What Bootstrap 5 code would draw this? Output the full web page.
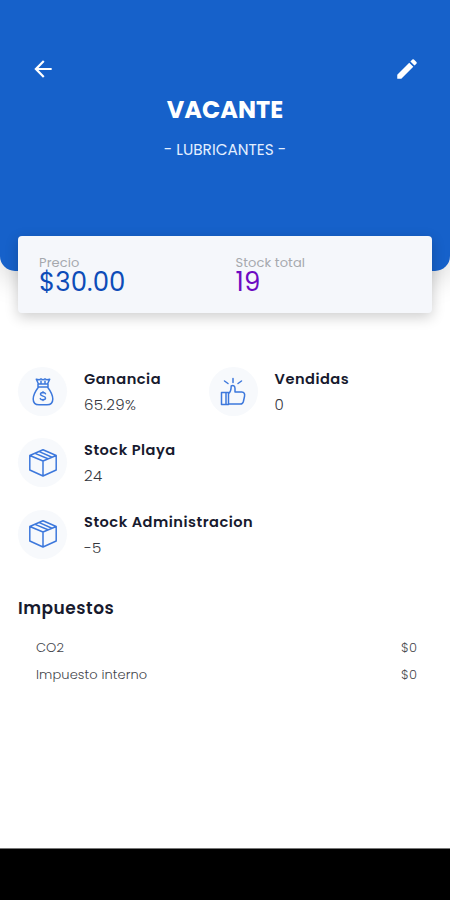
<!DOCTYPE html>
<html lang="es">
<head>
<meta charset="utf-8">
<meta name="viewport" content="width=device-width, initial-scale=1">
<title>Vacante</title>
<link href="https://cdn.jsdelivr.net/npm/bootstrap@5.3.0/dist/css/bootstrap.min.css" rel="stylesheet">
<style>
body{font-family:Poppins,Inter,"Open Sans",sans-serif;height:900px;overflow:hidden;color:#171a2e}
.hero{height:271px;background:#1661ca;border-radius:0 0 15px 15px;padding:56px 30px 0;box-shadow:0 8px 28px rgba(0,0,0,.17)}
.hero-title{font-size:24px;line-height:30px;font-weight:700;margin-top:13px}
.hero-sub{font-size:15.3px;line-height:20px;margin-top:15px;color:#e3efff}
.summary{height:77px;margin:-35px 18px 0;background:#f5f7fb;border-radius:4px;padding:18px 0 0 21px;box-shadow:0 4px 14px rgba(0,0,0,.2)}
.summary-cell{width:197px}
.cap{font-size:13px;line-height:17px;color:#a6a9ae;letter-spacing:.1px}
.amount{font-size:26px;line-height:23px;font-weight:400;color:#0d4cb8;letter-spacing:.1px}
.violet{color:#6d0bc2}
.stats{margin:53px 18px 0}
.stat{height:71.3px}
.stat-wide{width:190.5px}
.disc{width:49px;height:49px;border-radius:50%;background:#f7f9fc;margin-top:1px;flex:none}
.disc svg{fill:none;stroke:#3d78dc;stroke-width:1.5;stroke-linejoin:round;stroke-linecap:round}
.stat-body{margin-left:17px;padding-top:1px;white-space:nowrap}
.stat-name{font-size:14.6px;line-height:24px;font-weight:600;letter-spacing:.5px}
.stat-value{font-size:15px;line-height:20px;font-weight:300;color:#33353c;margin-top:4px;letter-spacing:.3px}
.taxes{margin:16px 18px 0}
.tax-head{font-size:17px;line-height:24px;font-weight:600;margin:0 0 14px;letter-spacing:.5px}
.tax-row{font-size:13px;line-height:27px;font-weight:300;color:#44464c;padding:0 15px 0 18px;letter-spacing:.1px}
.sysbar{height:52px;background:#000;border-top:1px solid #777}
</style>
</head>
<body class="d-flex flex-column bg-white">
<header class="hero text-white text-center">
  <div class="d-flex justify-content-between align-items-center">
    <svg width="26" height="26" viewBox="0 0 24 24" fill="currentColor"><path d="M20 11H7.830l5.590-5.590L12 4l-8 8 8 8 1.410-1.410L7.830 13H20z"/></svg>
    <svg width="26" height="26" viewBox="0 0 24 24" fill="currentColor"><path d="M3 17.250V21h3.750L17.810 9.940l-3.750-3.750zM20.710 7.040a1 1 0 0 0 0-1.410l-2.340-2.340a1 1 0 0 0-1.410 0l-1.830 1.830 3.750 3.750z"/></svg>
  </div>
  <h1 class="hero-title mb-0">VACANTE</h1>
  <p class="hero-sub mb-0">- LUBRICANTES -</p>
</header>
<section class="summary d-flex position-relative">
  <div class="summary-cell"><div class="cap">Precio</div><div class="amount">$30.00</div></div>
  <div class="summary-cell"><div class="cap">Stock total</div><div class="amount violet">19</div></div>
</section>
<svg class="d-none">
  <symbol id="box" viewBox="0 0 30 30"><path d="M15 1.800 28.200 7.500V22L15 28 1.800 22V7.500zM1.800 7.500 15 13l13.200-5.500M15 13v15M7 5.400 20 10.800M11.300 3.600 24 9.200"/></symbol>
</svg>
<main class="flex-grow-1">
  <div class="stats">
    <div class="d-flex">
      <div class="stat stat-wide d-flex">
        <div class="disc d-flex align-items-center justify-content-center"><svg width="22" height="30" viewBox="0 0 22 30"><path d="M6.500 7 4.300 2.200l2.700.6L9 1.800l2 1 2-1 2 1 2.700-.6L15.500 7M6 7h10v3H6zM6.500 10C3.500 14 1.200 18 1.200 22c0 4 2.300 5.800 5.800 5.800h8c3.500 0 5.800-1.800 5.800-5.800 0-4-2.300-8-5.300-12M9 4v3M13 4v3"/><path d="M13.500 16.700c-.8-1.700-5-1.500-5 .6 0 2.400 5 1.200 5 3.700 0 2.300-4.200 2.400-5.200.6M11 14.700v1M11 22.500v1"/></svg></div>
        <div class="stat-body"><div class="stat-name">Ganancia</div><div class="stat-value">65.29%</div></div>
      </div>
      <div class="stat d-flex">
        <div class="disc d-flex align-items-center justify-content-center"><svg width="26" height="30" viewBox="0 0 26 30"><path d="M1.500 15.500h7V27.500h-7zM6 15.500v12M8.500 16.500c2-1.300 2.700-3 2.700-7.500 2.200-1.200 3.800.1 3.800 2.500v3.500h6.700c2.700 0 3.300 2 2.800 4.500l-1.100 5c-.5 2-1.400 2.500-3 2.500H8.500M13 1.500v4M4.500 4l3.500 2.500M21.500 4 18 6.500"/></svg></div>
        <div class="stat-body"><div class="stat-name">Vendidas</div><div class="stat-value">0</div></div>
      </div>
    </div>
    <div class="stat d-flex">
      <div class="disc d-flex align-items-center justify-content-center"><svg width="30" height="30"><use href="#box"/></svg></div>
      <div class="stat-body"><div class="stat-name">Stock Playa</div><div class="stat-value">24</div></div>
    </div>
    <div class="stat d-flex">
      <div class="disc d-flex align-items-center justify-content-center"><svg width="30" height="30"><use href="#box"/></svg></div>
      <div class="stat-body"><div class="stat-name">Stock Administracion</div><div class="stat-value">-5</div></div>
    </div>
  </div>
  <section class="taxes">
    <h2 class="tax-head">Impuestos</h2>
    <div class="tax-row d-flex justify-content-between"><span>CO2</span><span>$0</span></div>
    <div class="tax-row d-flex justify-content-between"><span>Impuesto interno</span><span>$0</span></div>
  </section>
</main>
<footer class="sysbar"></footer>
<script src="https://cdn.jsdelivr.net/npm/bootstrap@5.3.0/dist/js/bootstrap.bundle.min.js"></script>
</body>
</html>
